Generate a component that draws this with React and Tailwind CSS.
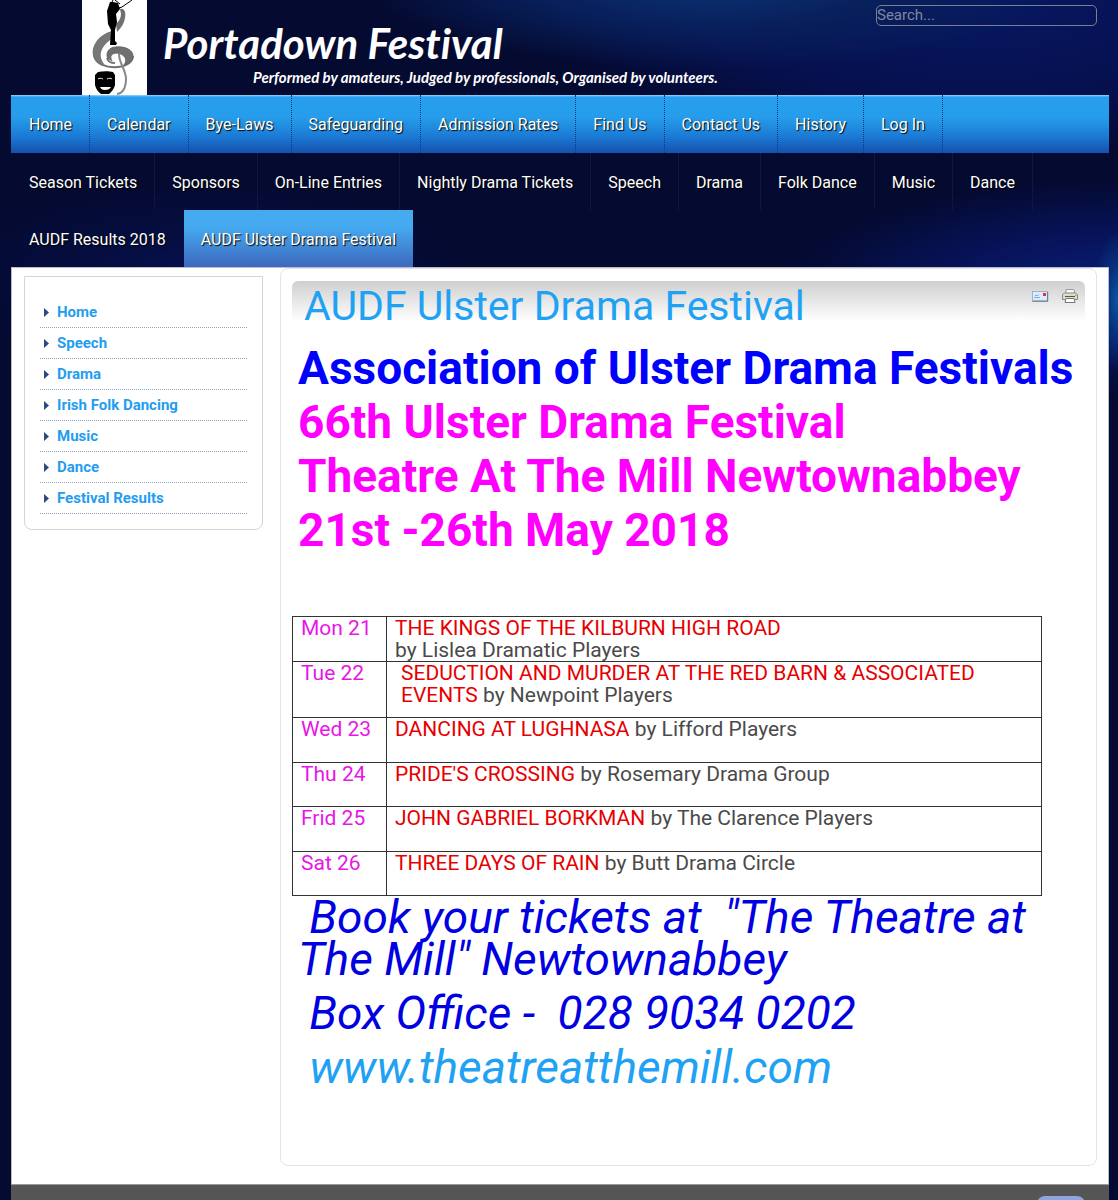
import React from "react";

const primary = ["Home", "Calendar", "Bye-Laws", "Safeguarding", "Admission Rates", "Find Us", "Contact Us", "History", "Log In"];
const secondary = ["Season Tickets", "Sponsors", "On-Line Entries", "Nightly Drama Tickets", "Speech", "Drama", "Folk Dance", "Music", "Dance"];
const side = ["Home", "Speech", "Drama", "Irish Folk Dancing", "Music", "Dance", "Festival Results"];

const shows = [
  { day: "Mon 21", title: "THE KINGS OF THE KILBURN HIGH ROAD", by: "by Lislea Dramatic Players", split: true, row: "h-[45px]", cell: "pl-2" },
  { day: "Tue 22", title: "SEDUCTION AND MURDER AT THE RED BARN & ASSOCIATED EVENTS", by: "by Newpoint Players", row: "h-14", cell: "pl-3.5" },
  { day: "Wed 23", title: "DANCING AT LUGHNASA", by: "by Lifford Players", row: "h-[45px]", cell: "pl-2" },
  { day: "Thu 24", title: "PRIDE'S CROSSING", by: "by Rosemary Drama Group", row: "h-11", cell: "pl-2" },
  { day: "Frid 25", title: "JOHN GABRIEL BORKMAN", by: "by The Clarence Players", row: "h-[45px]", cell: "pl-2" },
  { day: "Sat 26", title: "THREE DAYS OF RAIN", by: "by Butt Drama Circle", row: "h-11", cell: "pl-2" },
];

function Logo() {
  return (
    <svg className="ml-[71px] h-[95px] w-[65px] shrink-0 bg-white" viewBox="0 0 65 95" fill="none" role="img" aria-label="Portadown Festival logo">
      <path d="M38 9c5-1 6 4 5 9-1 6-4 10-8 14l-1-8c3-3 5-6 5-10z" fill="#707070" />
      <path d="M30 32C17 36 10 46 12 56c2 8 12 12 24 11 10-1 15-6 15-11" stroke="#707070" strokeWidth="2" />
      <path d="M31 31C15 36 8 48 13 58c2 4 6 6 10 7-7-8-6-18 8-27z" fill="#777" />
      <path d="M26 59c-3-6 1-12 8-12 9-1 17 3 17 9 0 5-5 8-9 9 4-5 1-11-7-12-5 0-8 3-5 8" fill="#707070" stroke="#666" />
      <path d="M25 58c1 4 4 5 8 5" stroke="#777" strokeWidth="2" />
      <path d="M37 54c0 9 6 14 7 24 0 9-2 15-9 16" stroke="#888" strokeWidth="2" />
      <path d="M28 2l-3 9 1 13 3 6-1 15h6l1-2-2-2V30l2-8-1-8 4-5-2-6-5-1z" fill="#000" />
      <path d="M34 9l6-2 10-7M29 4l2-4M33 0l5 4" stroke="#000" strokeWidth="1" />
      <path d="M13 75l3-3c5-1 11-1 15 0l2 3v10c-1 4-3 6-6 9h-8c-3-2-5-5-6-9z" fill="#000" />
      <path d="M16 79c1-1 3-1 5 0M25 79c2-1 4-1 5 0" stroke="#eee" strokeWidth="1" />
      <path d="M18 87h11c-1 2-3 3-6 3s-4-1-5-3z" fill="#fff" />
    </svg>
  );
}

function NavItem({ label, kind }) {
  const styles = {
    primary: "h-[58px] px-[17px] border-r border-dotted border-[#0b3a78]",
    secondary: "h-[57px] px-[17px] border-r border-dotted border-[#1b2447]",
    last: "h-[57px] px-[17px]",
    active: "ml-px h-[57px] px-[17px] bg-linear-to-b from-[#45aaf0] from-30% to-[#3c68bd]",
  };
  return (
    <li className="flex">
      <a href="#" className={"flex items-center pt-0.5 text-[16px] text-white [text-shadow:1px_1px_1px_#000] " + styles[kind]}>{label}</a>
    </li>
  );
}

function MailIcon() {
  return (
    <svg className="h-4 w-[18px]" viewBox="0 0 18 16">
      <rect x="1.5" y="3.5" width="15" height="9.5" fill="#dcecfa" stroke="#9fb3c5" />
      <path d="M1.5 13.2h15.2V4" fill="none" stroke="#60768c" />
      <path d="M4 7.5h3l1-1M3 9.500h6" stroke="#79afe0" fill="none" />
      <rect x="12" y="5" width="3" height="3" fill="#e0304f" />
    </svg>
  );
}

function PrintIcon() {
  return (
    <svg className="h-4 w-[18px]" viewBox="0 0 18 16">
      <path d="M5 6V1.5h7l1.5 1V6" fill="#f8f8f4" stroke="#999" />
      <path d="M1.5 6.5l2-1.5h11l2 1.5v5h-15z" fill="#dddccb" stroke="#8a897c" />
      <path d="M4 8.5h10" stroke="#555" />
      <path d="M5 10.500h8l1 4H4z" fill="#fff" stroke="#777" />
      <path d="M14 7.500h1.500" stroke="#b7a13a" />
    </svg>
  );
}

export default function App() {
  return (
    <div className="flex min-h-screen flex-col bg-[#040a30] bg-[radial-gradient(ellipse_24px_70px_at_100%_300px,#0b55a5,#08307a_50%,transparent),radial-gradient(ellipse_340px_110px_at_100%_290px,#0a1f78,#07135a_50%,transparent),radial-gradient(ellipse_360px_90px_at_64%_-20px,#0d3476,#08205c_50%,transparent),radial-gradient(ellipse_440px_150px_at_88%_10px,#071760,#06104e_60%,transparent),radial-gradient(ellipse_260px_90px_at_18%_270px,#06104c,transparent)] bg-no-repeat pr-[9px] pl-[11px] font-['Roboto',sans-serif]">
      <header className="flex h-[95px] items-start">
        <Logo />
        <div className="ml-4 flex-1 font-['Lato',sans-serif] font-bold text-white italic [font-variant-ligatures:none]">
          <h1 className="pt-[19px] text-[42px] leading-[48px] whitespace-nowrap">Portadown Festival</h1>
          <p className="pl-[90px] text-[15px] leading-5 whitespace-nowrap">Performed by amateurs, Judged by professionals, Organised by volunteers.</p>
        </div>
        <input type="search" aria-label="Search" placeholder="Search..." className="mt-[5px] mr-3 h-[21px] w-[221px] rounded-[5px] border border-[#7b7f94] bg-transparent text-[15px] text-white placeholder:text-[#8286a0]" />
      </header>

      <nav aria-label="Main">
        <ul className="flex flex-wrap bg-[linear-gradient(to_bottom,#9fd4f7_0,#279fee_2px,#269dea_38%,#1b7cd6_70%,#1650ae)] pl-px">
          {primary.map((l) => <NavItem key={l} label={l} kind="primary" />)}
        </ul>
        <ul className="flex flex-wrap pl-px">
          {secondary.map((l) => <NavItem key={l} label={l} kind="secondary" />)}
          <NavItem label="AUDF Results 2018" kind="last" />
          <NavItem label="AUDF Ulster Drama Festival" kind="active" />
        </ul>
      </nav>

      <div className="flex items-start border border-b-0 border-[#b9bccb] bg-white pr-[11px] pb-[18px] pl-3">
        <aside className="mt-2 w-[239px] shrink-0 rounded-b-lg border border-[#d5d5d5] px-[15px] pt-5 pb-[15px]">
          <ul>
            {side.map((l) => (
              <li key={l} className="flex h-[31px] items-center border-b border-dotted border-[#8fa3bd]">
                <svg className="ml-1 h-[9px] w-[5px]" viewBox="0 0 5 9"><path d="M0 0l5 4.500L0 9z" fill="#2c4a80" /></svg>
                <a href="#" className="ml-2 text-[15px] font-bold text-[#1f9df0]">{l}</a>
              </li>
            ))}
          </ul>
        </aside>

        <main className="ml-[17px] flex-1 rounded-lg border border-[#e4e4e6] px-[11px] pt-3 pb-[77px]">
          <div className="flex h-10 items-start justify-between rounded-t-md bg-linear-to-b from-[#cfcfcf] to-white pl-3 pr-1.5">
            <h2 className="text-[41px] leading-[50px] text-[#1fa2f3]">AUDF Ulster Drama Festival</h2>
            <div className="flex gap-3 pt-[7px]">
              <a href="#" aria-label="Email"><MailIcon /></a>
              <a href="#" aria-label="Print"><PrintIcon /></a>
            </div>
          </div>

          <div className="mt-5 ml-1.5 text-[46px] leading-[54px] font-bold text-[#f0f]">
            <p className="text-[#00f]">Association of Ulster Drama Festivals</p>
            <p>66th Ulster Drama Festival</p>
            <p>Theatre At The Mill Newtownabbey</p>
            <p>21st -26th May 2018</p>
          </div>

          <table className="mt-[59px] w-[750px] table-fixed border-collapse text-[21px] leading-[22px] text-[#4a4a4a]">
            <colgroup>
              <col className="w-[94px]" />
              <col />
            </colgroup>
            <tbody>
              {shows.map((s) => (
                <tr key={s.day} className={s.row}>
                  <th scope="row" className="border border-[#333] pl-2 text-left align-top font-normal text-[#e815e8]">{s.day}</th>
                  <td className={"border border-[#333] pr-10 align-top " + s.cell}>
                    <span className="text-[#e60000]">{s.title}</span>
                    {s.split ? <br /> : " "}
                    {s.by}
                  </td>
                </tr>
              ))}
            </tbody>
          </table>

          <div className="ml-1.5 text-[46px] leading-[42px] text-[#0000e0] italic">
            <p>&nbsp;Book your tickets at&nbsp; "The Theatre at The Mill" Newtownabbey</p>
            <p className="mt-3">&nbsp;Box Office -&nbsp; 028 9034 0202</p>
            <p className="mt-3">&nbsp;<a href="#" className="text-[#1fa2f3]">www.theatreatthemill.com</a></p>
          </div>
        </main>
      </div>

      <footer className="flex h-4 flex-auto justify-end overflow-hidden border-t border-[#9a9a9a] bg-[#555] pt-[11px] pr-6">
        <button type="button" aria-label="Back to top" className="h-5 w-12 rounded-t-lg bg-[#8da4e0]" />
      </footer>
    </div>
  );
}
